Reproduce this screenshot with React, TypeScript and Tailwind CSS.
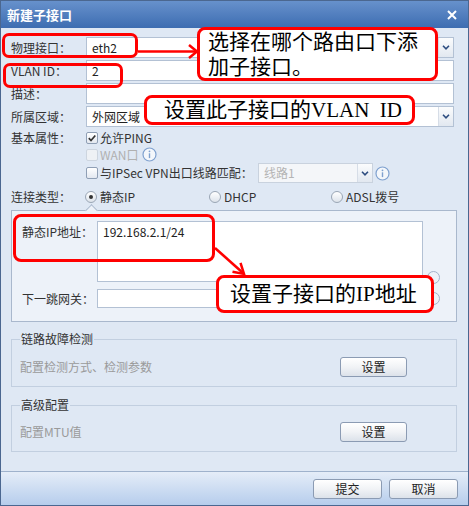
import React from "react";

const ui = "font-['Noto_Sans_CJK_SC',sans-serif] text-[12px] leading-[16px]";
const callout = "font-['Liberation_Serif','Noto_Sans_CJK_SC',serif] text-[21px] text-black";

function Chevron() {
  return (
    <svg width="8" height="5" viewBox="0 0 8 5">
      <path d="M1 0.8l3 3 3-3" fill="none" stroke="#2d4d80" strokeWidth="1.6" />
    </svg>
  );
}

function SelectBox({ value, disabled }: { value: string; disabled?: boolean }) {
  return (
    <div
      className={`flex h-full w-full items-stretch border ${
        disabled ? "border-[#c9d2de] bg-[#f4f6f9]" : "border-[#b3c1d4] bg-white"
      }`}
    >
      <div className={`flex flex-1 items-center pl-[5px] ${disabled ? "text-[#b4b4b4]" : "text-[#222]"}`}>
        {value}
      </div>
      <div className="flex w-[15px] items-center justify-center border-l border-[#d6dde7] bg-gradient-to-b from-[#fbfcfd] to-[#e2e8f0]">
        <Chevron />
      </div>
    </div>
  );
}

function TextBox({ value, className = "" }: { value?: string; className?: string }) {
  return (
    <div className={`flex h-full items-center border border-[#b3c1d4] bg-white pl-[5px] text-[#222] ${className}`}>
      {value}
    </div>
  );
}

function Checkbox({ checked, disabled }: { checked?: boolean; disabled?: boolean }) {
  return (
    <div
      className={`flex h-[12px] w-[12px] shrink-0 items-center justify-center rounded-[2px] border ${
        disabled ? "border-[#cdd5df] bg-[#eef1f5]" : "border-[#8f9fb5] bg-gradient-to-b from-white to-[#e3e8f0]"
      }`}
    >
      {checked && (
        <svg width="10" height="10" viewBox="0 0 10 10">
          <path d="M1.8 5.2l2.2 2.3 4.3-5" fill="none" stroke="#333" strokeWidth="1.7" />
        </svg>
      )}
    </div>
  );
}

function Radio({ checked }: { checked?: boolean }) {
  return (
    <div className="flex h-[12px] w-[12px] shrink-0 items-center justify-center rounded-full border border-[#9aa6b5] bg-gradient-to-b from-white to-[#dde3eb]">
      {checked && <div className="h-[4px] w-[4px] rounded-full bg-[#333]" />}
    </div>
  );
}

function Info() {
  return (
    <svg width="15" height="15" viewBox="0 0 15 15" className="shrink-0">
      <circle cx="7.5" cy="7.5" r="6.5" fill="#f4f7fb" stroke="#7fa1cf" strokeWidth="1.2" />
      <circle cx="7.5" cy="4.3" r="0.9" fill="#7fa1cf" />
      <path d="M7.5 6.3v4.8" stroke="#7fa1cf" strokeWidth="1.4" />
    </svg>
  );
}

function Ring() {
  return <div className="h-[13px] w-[13px] shrink-0 rounded-full border border-[#a2b3ca] bg-[#eef2f8]" />;
}

function Btn({ label, className = "" }: { label: string; className?: string }) {
  return (
    <div
      className={`flex h-[20px] items-center justify-center rounded-[3px] border border-[#8b9bb3] bg-gradient-to-b from-white via-[#f1f3f6] to-[#dce2ea] text-[#222] ${className}`}
    >
      {label}
    </div>
  );
}

function Row({ label, children }: { label: string; children: React.ReactNode }) {
  return (
    <div className="flex h-[21px] items-center">
      <div className="w-[75px] shrink-0 text-[#333]">{label}</div>
      <div className="h-full flex-1">{children}</div>
    </div>
  );
}

export default function App() {
  return (
    <div className={`relative flex h-[506px] w-[469px] flex-col overflow-hidden border border-[#4b6790] bg-[#dfe8f4] ${ui}`}>
      {/* Title bar */}
      <div className="flex h-[27px] shrink-0 items-center justify-between bg-gradient-to-b from-[#6791cc] to-[#3d6db1] pl-[6px] pr-[11px]">
        <span className="text-[13px] font-bold text-white">新建子接口</span>
        <svg width="10" height="10" viewBox="0 0 10 10">
          <path d="M1 1l8 8M9 1l-8 8" stroke="#fff" strokeWidth="2" />
        </svg>
      </div>

      {/* Body */}
      <div className="flex flex-1 flex-col pt-[9px]">
        <div className="flex flex-col gap-[2px] pl-[10px] pr-[14px]">
          <Row label="物理接口：">
            <SelectBox value="eth2" />
          </Row>
          <Row label="VLAN ID：">
            <TextBox value="2" />
          </Row>
          <Row label="描述：">
            <TextBox />
          </Row>
          <Row label="所属区域：">
            <SelectBox value="外网区域" />
          </Row>
        </div>

        <div className="mt-[2px] flex flex-col pl-[10px]">
          <div className="flex h-[17px] items-center">
            <div className="w-[75px] text-[#333]">基本属性：</div>
            <Checkbox checked />
            <span className="ml-[2px] text-[#333]">允许PING</span>
          </div>
          <div className="flex h-[17px] items-center">
            <div className="w-[75px]" />
            <Checkbox disabled />
            <span className="ml-[2px] text-[#b0b0b0]">WAN口</span>
            <span className="ml-[3px]">
              <Info />
            </span>
          </div>
          <div className="flex h-[20px] items-center">
            <div className="w-[75px]" />
            <Checkbox />
            <span className="ml-[2px] w-[158px] text-[#333]">与IPSec VPN出口线路匹配：</span>
            <div className="h-[20px] w-[115px]">
              <SelectBox value="线路1" disabled />
            </div>
            <span className="ml-[2px]">
              <Info />
            </span>
          </div>
        </div>

        <div className="mt-[6px] flex h-[16px] items-center pl-[10px]">
          <div className="w-[74px] text-[#333]">连接类型：</div>
          <div className="flex w-[124px] items-center gap-[3px]">
            <Radio checked />
            <span className="text-[#333]">静态IP</span>
          </div>
          <div className="flex w-[122px] items-center gap-[3px]">
            <Radio />
            <span className="text-[#333]">DHCP</span>
          </div>
          <div className="flex items-center gap-[3px]">
            <Radio />
            <span className="text-[#333]">ADSL拨号</span>
          </div>
        </div>

        {/* Static IP panel */}
        <div className="relative ml-[10px] mr-[11px] mt-[5px] border border-[#a9b8cd] bg-[#edf2f9] pb-[13px] pl-[10px] pt-[10px]">
          <div className="absolute left-[75px] top-[-5px] h-[9px] w-[9px] rotate-45 border-l border-t border-[#a9b8cd] bg-[#edf2f9]" />
          <div className="flex items-start">
            <div className="w-[75px] pt-[3px] text-[#333]">静态IP地址：</div>
            <div className="h-[61px] w-[326px] border border-[#b3c1d4] bg-white pl-[5px] pt-[2px] text-[#222]">
              192.168.2.1/24
            </div>
            <div className="mb-[-2px] ml-[4px] self-end">
              <Ring />
            </div>
          </div>
          <div className="mt-[7px] flex h-[19px] items-center">
            <div className="w-[75px] text-[#333]">下一跳网关：</div>
            <TextBox className="w-[326px]" />
            <div className="ml-[4px]">
              <Ring />
            </div>
          </div>
        </div>

        {/* Link failure detection */}
        <fieldset className="ml-[10px] mr-[11px] mt-[9px] border border-[#c2cfe0] px-[8px] pb-[9px]">
          <legend className="px-[1px] text-[#333]">链路故障检测</legend>
          <div className="mt-[10px] flex h-[20px] items-center">
            <span className="flex-1 text-[#9a9a9a]">配置检测方式、检测参数</span>
            <Btn label="设置" className="mr-[41px] w-[67px]" />
          </div>
        </fieldset>

        {/* Advanced */}
        <fieldset className="ml-[10px] mr-[11px] mt-[10px] border border-[#c2cfe0] px-[8px] pb-[9px]">
          <legend className="px-[1px] text-[#333]">高级配置</legend>
          <div className="mt-[9px] flex h-[20px] items-center">
            <span className="flex-1 text-[#9a9a9a]">配置MTU值</span>
            <Btn label="设置" className="mr-[41px] w-[67px]" />
          </div>
        </fieldset>
      </div>

      {/* Footer */}
      <div className="flex h-[34px] shrink-0 justify-end gap-[7px] border-t border-[#9fb2cc] bg-gradient-to-b from-[#e5edf8] to-[#b6cdec] pr-[10px] pt-[7px]">
        <Btn label="提交" className="w-[69px]" />
        <Btn label="取消" className="w-[69px]" />
      </div>

      {/* Annotations */}
      <div className="absolute left-[1px] top-[32px] h-[25px] w-[136px] rounded-[7px] border-[3px] border-[#ff0000]" />
      <div className="absolute left-[2px] top-[62px] h-[25px] w-[120px] rounded-[7px] border-[3px] border-[#ff0000]" />
      <div className="absolute left-[12px] top-[213px] h-[48px] w-[202px] rounded-[8px] border-[3px] border-[#ff0000]" />

      <svg className="pointer-events-none absolute left-0 top-0" width="469" height="506">
        <path d="M137 50.5H195" stroke="#ff0000" strokeWidth="2.5" />
        <path d="M188 44l8 6.5-8 6.5" fill="none" stroke="#ff0000" strokeWidth="2.5" />
        <path d="M214 247L242 272" stroke="#ff0000" strokeWidth="2.5" />
        <path d="M231.5 270.8L243 273L239.5 261.8" fill="none" stroke="#ff0000" strokeWidth="2.5" />
      </svg>

      <div className={`absolute left-[196px] top-[26px] h-[54px] w-[241px] rounded-[8px] border-[3px] border-[#ff0000] bg-white pl-[8px] leading-[25px] ${callout}`}>
        选择在哪个路由口下添
        <br />
        加子接口。
      </div>
      <div className={`absolute left-[143px] top-[94px] flex h-[30px] w-[271px] items-center rounded-[8px] border-[3px] border-[#ff0000] bg-white pl-[17px] ${callout}`}>
        <span className="whitespace-pre">设置此子接口的VLAN  ID</span>
      </div>
      <div className={`absolute left-[215px] top-[274px] flex h-[38px] w-[218px] items-center rounded-[8px] border-[3px] border-[#ff0000] bg-white pl-[11px] ${callout}`}>
        设置子接口的IP地址
      </div>
    </div>
  );
}
